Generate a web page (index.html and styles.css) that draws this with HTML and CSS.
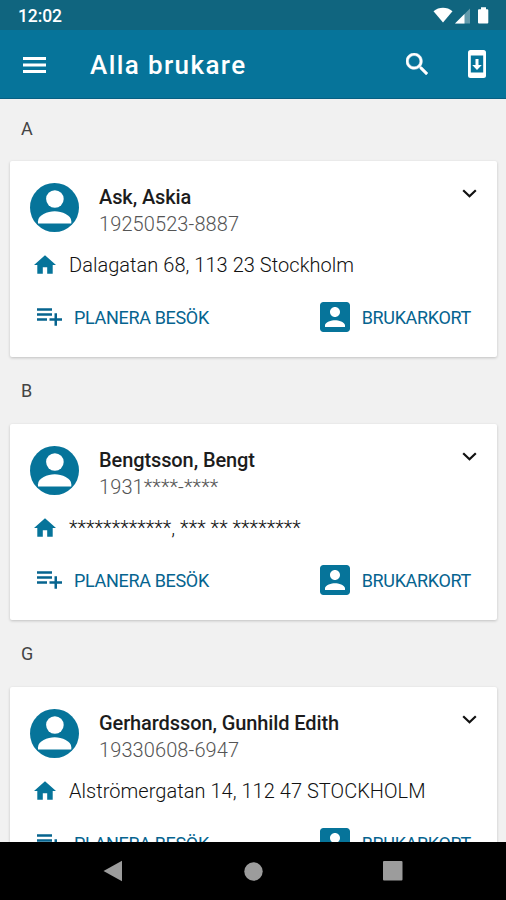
FILE: index.html
```html
<!DOCTYPE html>
<html lang="sv">
<head>
<meta charset="utf-8">
<title>Alla brukare</title>
<link rel="stylesheet" href="styles.css">
</head>
<body>
<svg class="defs" width="0" height="0" aria-hidden="true">
  <symbol id="avatar" viewBox="0 0 49 49"><circle cx="24.5" cy="24.5" r="24.5" fill="#06749a"/><circle cx="24.9" cy="16" r="8.8" fill="#fff"/><path fill="#fff" d="M8 40.6v-2.4c0-6 9.5-9.9 16.7-9.9s16.600 3.900 16.600 9.900v2.400z"/></symbol>
  <symbol id="home" viewBox="2 3 20 17"><path d="M10 20v-6h4v6h5v-8h3L12 3 2 12h3v8z"/></symbol>
  <symbol id="plan" viewBox="2 6 20 14"><path d="M14 10H2v2h12v-2zm0-4H2v2h12V6zm4 8v-4h-2v4h-4v2h4v4h2v-4h4v-2h-4zM2 16h8v-2H2v2z"/></symbol>
  <symbol id="card" viewBox="3 3 18 18"><path d="M3 5v14c0 1.100.89 2 2 2h14c1.100 0 2-.9 2-2V5c0-1.100-.9-2-2-2H5c-1.110 0-2 .9-2 2zm12 4c0 1.660-1.340 3-3 3s-3-1.340-3-3 1.340-3 3-3 3 1.340 3 3zm-9 8c0-2 4-3.100 6-3.100s6 1.100 6 3.100v1H6v-1z"/></symbol>
  <symbol id="chevron" viewBox="0 0 15 9"><path d="M1.200 1.200 7.500 7.200 13.800 1.200" fill="none" stroke="#111" stroke-width="2.200"/></symbol>
</svg>
<div class="statusbar">
  <span class="clock">12:02</span>
  <svg class="system" width="58" height="18" viewBox="0 0 58 18" fill="#fff">
    <path d="M.5 4.200C6-.4 14-.4 19.500 4.200L10 15.500z"/>
    <path d="M22 16.500 37 1.500v15z" opacity=".35"/><path d="M22 16.500 31.500 7v9.500z"/>
    <path d="M48 .3h5v1.900h1.300q1 0 1 1v12.300q0 1-1 1h-8.300q-1 0-1-1V3.200q0-1 1-1h2z"/>
  </svg>
</div>
<header class="appbar">
  <svg class="menu" width="23" height="16" viewBox="0 0 23 16" fill="#fff"><path d="M0 0h23v3H0zM0 6.500h23v3H0zM0 13h23v3H0z"/></svg>
  <h1 class="title">Alla brukare</h1>
  <svg class="search" width="22" height="22" viewBox="3 3 17.500 17.500" fill="#fff" stroke="#fff" stroke-width=".4"><path d="M15.500 14h-.79l-.28-.27C15.410 12.590 16 11.110 16 9.500 16 5.910 13.090 3 9.500 3S3 5.910 3 9.500 5.910 16 9.500 16c1.610 0 3.090-.59 4.230-1.570l.27.28v.79l5 4.990L20.490 19l-4.990-5zm-6 0C7.010 14 5 11.990 5 9.500S7.010 5 9.500 5 14 7.010 14 9.500 11.990 14 9.500 14z"/></svg>
  <svg class="sync" width="18" height="28" viewBox="0 0 18 28"><rect width="18" height="28" rx="2.500" fill="#fff"/><path d="M2.800 5.500h12.400v17H2.800z" fill="#06749a"/><path d="M7.500 9h3v6h3.300L9 20l-4.800-5h3.300z" fill="#fff"/></svg>
</header>
<main class="list">
  <h2 class="letter">A</h2>
  <article class="person">
    <div class="top">
      <svg class="avatar"><use href="#avatar"/></svg>
      <div class="id"><div class="name">Ask, Askia</div><div class="number">19250523-8887</div></div>
      <svg class="chevron"><use href="#chevron"/></svg>
    </div>
    <div class="address"><svg class="home"><use href="#home"/></svg><span>Dalagatan 68, 113 23 Stockholm</span></div>
    <div class="actions">
      <a class="action"><svg class="plan"><use href="#plan"/></svg><span>PLANERA BESÖK</span></a>
      <a class="action"><svg class="card"><use href="#card"/></svg><span>BRUKARKORT</span></a>
    </div>
  </article>
  <h2 class="letter">B</h2>
  <article class="person">
    <div class="top">
      <svg class="avatar"><use href="#avatar"/></svg>
      <div class="id"><div class="name">Bengtsson, Bengt</div><div class="number">1931****-****</div></div>
      <svg class="chevron"><use href="#chevron"/></svg>
    </div>
    <div class="address"><svg class="home"><use href="#home"/></svg><span>************, *** ** ********</span></div>
    <div class="actions">
      <a class="action"><svg class="plan"><use href="#plan"/></svg><span>PLANERA BESÖK</span></a>
      <a class="action"><svg class="card"><use href="#card"/></svg><span>BRUKARKORT</span></a>
    </div>
  </article>
  <h2 class="letter">G</h2>
  <article class="person">
    <div class="top">
      <svg class="avatar"><use href="#avatar"/></svg>
      <div class="id"><div class="name">Gerhardsson, Gunhild Edith</div><div class="number">19330608-6947</div></div>
      <svg class="chevron"><use href="#chevron"/></svg>
    </div>
    <div class="address"><svg class="home"><use href="#home"/></svg><span>Alströmergatan 14, 112 47 STOCKHOLM</span></div>
    <div class="actions">
      <a class="action"><svg class="plan"><use href="#plan"/></svg><span>PLANERA BESÖK</span></a>
      <a class="action"><svg class="card"><use href="#card"/></svg><span>BRUKARKORT</span></a>
    </div>
  </article>
</main>
<nav class="navbar">
  <svg width="20" height="22" viewBox="0 0 20 22"><path d="M.5 11 19 .8v20.400z" fill="#9c9c9c"/></svg>
  <svg width="19" height="19" viewBox="0 0 19 19"><circle cx="9.500" cy="9.500" r="9.200" fill="#9c9c9c"/></svg>
  <svg width="20" height="20" viewBox="0 0 20 20"><rect width="19.500" height="19.500" rx="1" fill="#9c9c9c"/></svg>
</nav>
</body>
</html>
```
FILE: styles.css
```css
* { box-sizing: border-box; }
body {
  margin: 0;
  height: 900px;
  display: flex;
  flex-direction: column;
  overflow: hidden;
  background: #f1f1f1;
  font-family: Roboto, sans-serif;
  color: #1c1c1c;
}
svg { display: block; flex: none; }
.defs { position: absolute; }
.statusbar {
  flex: none;
  height: 30px;
  padding: 0 15px 0 18px;
  display: flex;
  justify-content: space-between;
  background: #10657f;
  color: #fff;
}
.clock { font-size: 17.5px; line-height: 32px; font-weight: 500; letter-spacing: -.1px; }
.system { margin-top: 7px; }
.appbar {
  flex: none;
  height: 69px;
  padding: 0 20px 0 24px;
  display: flex;
  align-items: center;
  background: #06749a;
  border-bottom: 1px solid #075f82;
}
.title {
  flex: 1;
  margin: 2px 0 0 44px;
  font-size: 26px;
  line-height: 32px;
  font-weight: 500;
  letter-spacing: 1.4px;
  color: #fff;
}
.menu { margin: 1px 0 0 -1px; }
.search { margin-right: 40px; }
.list { flex: 1; min-height: 0; overflow: hidden; padding: 0 9px 0 10px; }
.letter {
  margin: 0;
  height: 67px;
  padding: 4px 0 0 11px;
  font-size: 18px;
  line-height: 60px;
  font-weight: 400;
  color: #444;
}
.letter:first-child { height: 62px; padding-top: 0; }
.person {
  height: 196px;
  padding: 22px 20px 0;
  border-radius: 2px;
  background: #fff;
  box-shadow: 0 1px 3px rgba(0, 0, 0, .2);
}
.top { display: flex; height: 62px; }
.avatar { width: 49px; height: 49px; }
.id { flex: 1; padding: 1px 0 0 20px; }
.name { font-size: 20px; line-height: 27px; font-weight: 500; letter-spacing: -.1px; }
.number { font-size: 20px; line-height: 26px; font-weight: 300; letter-spacing: .1px; color: #555; }
.chevron { width: 15px; height: 9px; margin-top: 6px; }
.address {
  display: flex;
  align-items: center;
  height: 38px;
  gap: 13px;
  padding-left: 4px;
  font-size: 20px;
  font-weight: 300;
  letter-spacing: .04px;
  color: #111;
}
.address span { padding-top: 2px; }
.home { width: 22px; height: 21px; fill: #06749a; }
.actions {
  display: flex;
  justify-content: space-between;
  height: 66px;
  padding: 1px 6px 0 7px;
  color: #06648f;
}
.action { display: flex; align-items: center; height: 66px; gap: 12px; font-size: 18px; font-weight: 400; letter-spacing: -.33px; }
.plan { width: 25px; height: 18px; fill: #06648f; }
.card { width: 30px; height: 30px; fill: #06749a; }
.navbar {
  flex: none;
  height: 58px;
  padding: 0 103px;
  display: flex;
  align-items: center;
  justify-content: space-between;
  background: #000;
}
```
